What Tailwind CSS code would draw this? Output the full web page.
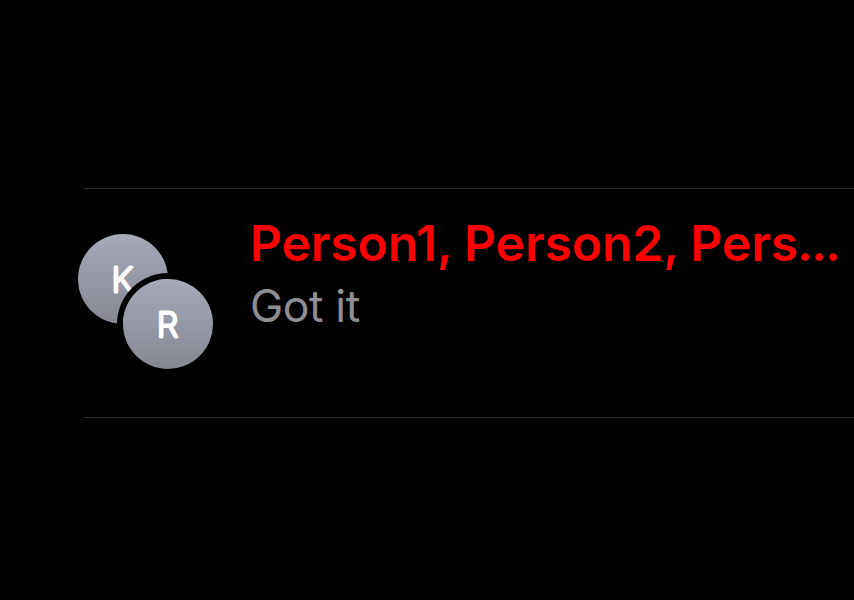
<!DOCTYPE html>
<html lang="en"><head><meta charset="utf-8"><title>Messages</title>
<script src="https://cdn.jsdelivr.net/npm/@tailwindcss/browser@4"></script></head>
<body class="h-[600px] w-[854px] overflow-hidden bg-black pt-[188px] font-['Inter',sans-serif]">
<main class="ml-[84px] h-[230px] border-y border-[#2c2c2e]">
<div class="flex">
<div class="relative -ml-[6px] mt-[45px] h-[136px] w-[136px] shrink-0">
<div class="size-[90px] rounded-full bg-linear-to-b from-[#a6aab9] to-[#858892]">
<svg viewBox="0 0 90 90" class="size-full"><text x="44.3" y="58.2" text-anchor="middle" font-size="34.5" fill="white" stroke="white" stroke-width="2.9" stroke-linejoin="round" class="font-extralight">K</text></svg></div>
<div class="absolute left-[45px] top-[45px] size-[90px] rounded-full bg-linear-to-b from-[#a6aab9] to-[#858892] ring-6 ring-black">
<svg viewBox="0 0 90 90" class="size-full"><text x="44.5" y="58" text-anchor="middle" font-size="34.5" fill="white" stroke="white" stroke-width="2.9" stroke-linejoin="round" class="font-extralight">R</text></svg></div>
</div>
<div class="ml-[36px] mt-[24px] whitespace-nowrap">
<h1 class="text-[50px] font-semibold leading-[60px] tracking-[-0.25px] text-[#ff0000]">Person1, Person2, Pers<span class="-ml-[1px] tracking-[-1.9px]">...</span></h1>
<p class="mt-[3px] text-[44.5px] leading-[60px] tracking-[-0.4px] text-[#8e8e93]">Got it</p>
</div></div></main></body></html>
